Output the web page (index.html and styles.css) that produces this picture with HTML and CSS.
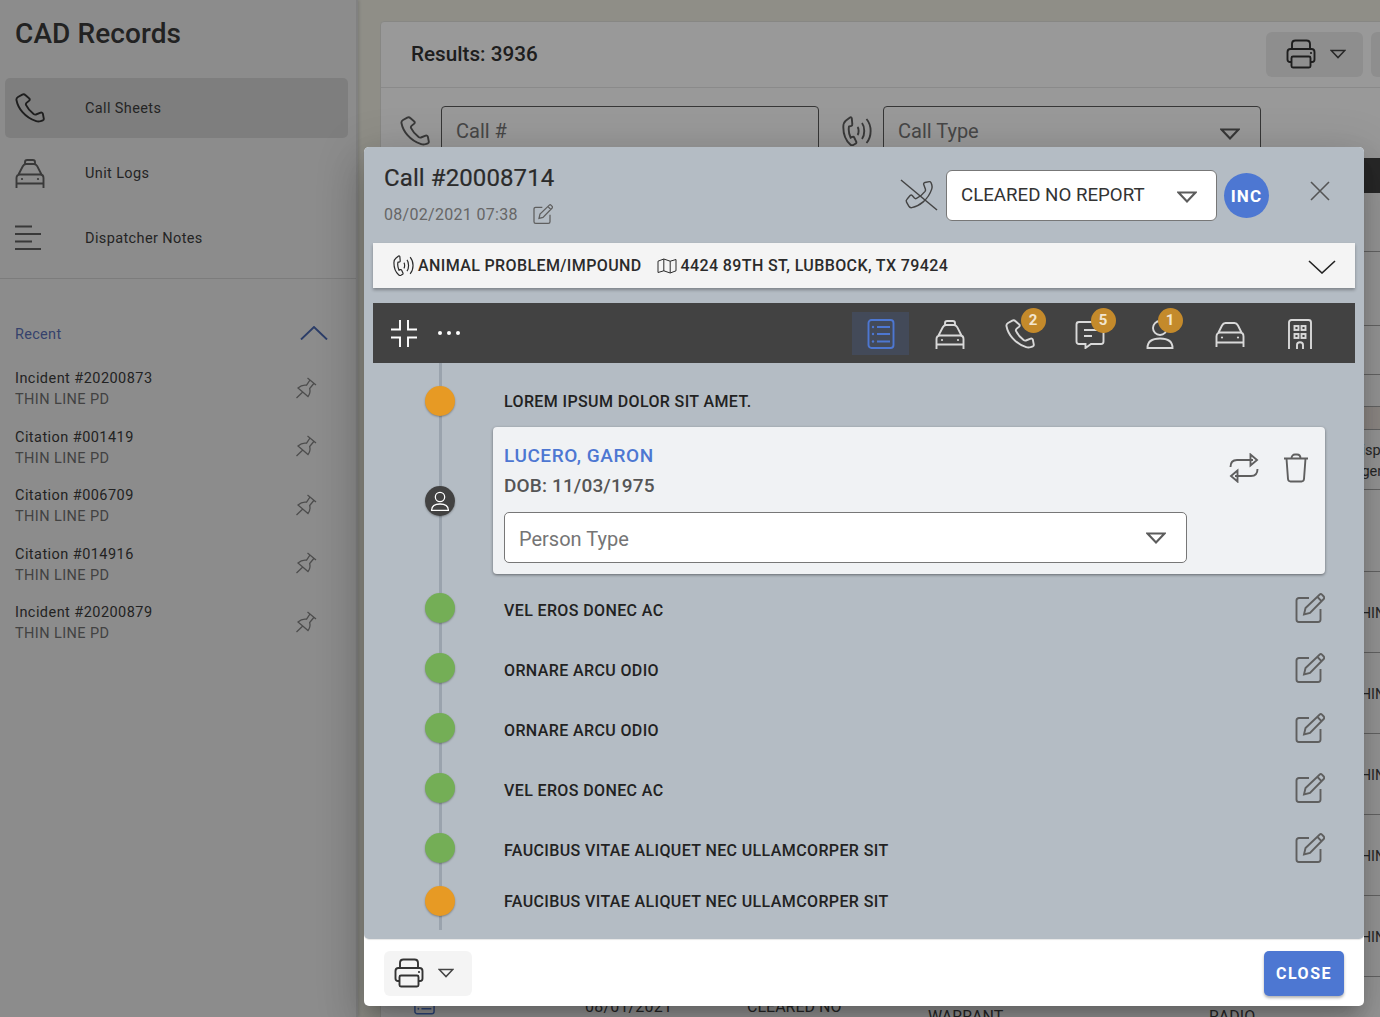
FILE: index.html
```html
<!DOCTYPE html>
<html lang="en">
<head>
<meta charset="utf-8">
<title>CAD Records</title>
<link rel="stylesheet" href="styles.css">
</head>
<body>
<svg class="defs" width="0" height="0" aria-hidden="true">
  <symbol id="i-phone" viewBox="0 0 30 30"><path d="M7.3 1.6 3 4C1.8 4.7 1.2 5.9 1.5 7.2 3 15 9.500 24.300 21.200 28.200c1.500.5 3 .4 4.400 0l2.300-.9c.7-.4 1-1 .9-1.700l-.9-4.700c-.2-1-1.200-1.600-2.200-1.200l-4.800 1.800c-.9.3-1.600.1-2.300-.4-3.200-2.500-5.900-5.700-7.500-9-.4-.8-.2-1.600.4-2.200l2.700-2.300c.6-.6.700-1.300.2-2L10.600 2.300C9.700 1.300 8.400 1 7.300 1.600Z"/></symbol>
  <symbol id="i-taxi" viewBox="0 0 30 30"><path d="M10 6V4.300C10 3 10.800 2 12.200 2h5.600C19.200 2 20 3 20 4.300V6M3.500 16.500 7.800 8.200C8.500 6.800 9.600 6 11 6h8c1.400 0 2.500.8 3.200 2.200l4.300 8.300M1.500 30V20c0-2 1.200-3.500 3.500-3.500h20c2.300 0 3.500 1.500 3.500 3.500v10M1.500 25.500h27"/><circle class="fill" cx="7" cy="21" r="1.100"/><circle class="fill" cx="23" cy="21" r="1.100"/></symbol>
  <symbol id="i-car" viewBox="0 0 30 30"><path d="M3.500 13.500 7 6.500C7.800 5 8.800 4 10.500 4h9c1.700 0 2.700 1 3.500 2.500l3.500 7M1.500 28V17.500c0-2.500 1.500-4 3.500-4h20c2 0 3.500 1.500 3.500 4V28M1.500 23.500h27"/><circle class="fill" cx="7" cy="18.500" r="1.100"/><circle class="fill" cx="23" cy="18.500" r="1.100"/></symbol>
  <symbol id="i-lines" viewBox="0 0 30 30"><path d="M0 3.500H17M0 11H26M0 18.500H17M0 26H26"/></symbol>
  <symbol id="i-pin" viewBox="0 0 22 22"><path d="M12.500 1 21 8M15 3 11.500 8.200C8.500 7.700 5.500 8.700 3 11l10 8.500c1.800-2.300 2.400-5 1.700-8L18.800 6.500M7.500 15.300 1.500 21"/></symbol>
  <symbol id="i-signal" viewBox="0 0 30 30"><path d="M8 1.500 4 4.500C2 6 1.300 8 1.300 11c0 7 3 14 7 17.500 1 1 2 1 3 .5l2.500-1.500c.6-.5.7-1.100.4-1.800l-2-4.200c-.4-.8-1-.9-1.800-.6l-1.800.8C7 18 6.400 13.500 7 10.500l2.300-.6c.8-.3 1.100-.9 1-1.700L9.800 2.400C9.600 1.400 8.800 1 8 1.500Z"/><path d="M15.500 11c1.500 1.300 1.500 6.500 0 8M20 7c3 3.800 3 12.200 0 16M24.500 3c5.500 6.500 5.500 17.500 0 24"/></symbol>
  <symbol id="i-map" viewBox="0 0 20 16"><path d="M1 3.200 6.800 1l6.400 2.200L19 1.500v11.300l-5.800 2.200-6.400-2.200L1 14.500ZM6.800 1v12M13.200 3.200V15"/></symbol>
  <symbol id="i-caret" viewBox="0 0 20 12"><path d="M1.500 1.500h17L10 10.500Z"/></symbol>
  <symbol id="i-edit" viewBox="0 0 30 30"><path d="M14 5H4C2.500 5 1.500 6 1.500 7.500v19C1.500 28 2.500 29 4 29h19c1.500 0 2.500-1 2.500-2.500V16"/><path d="M9 21.500 10.500 15 24.500 1.700c.8-.7 1.800-.7 2.500 0l1.700 1.800c.7.800.7 1.700 0 2.500L15 20Z M22.500 4l4.200 4.300"/></symbol>
  <symbol id="i-printer" viewBox="0 0 30 30"><path d="M6 10V5c0-2.200 1.300-3.500 3.500-3.500h11C22.700 1.500 24 2.800 24 5v5M6 23H4c-1.500 0-2.500-1-2.500-2.500V13c0-1.800 1.200-3 3-3h21c1.800 0 3 1.200 3 3v7.500c0 1.500-1 2.500-2.500 2.500h-2"/><rect x="5.500" y="17.500" width="19" height="11" rx="1.500"/><circle class="fill" cx="25" cy="14" r="1.100"/></symbol>
  <symbol id="i-list" viewBox="0 0 30 30"><rect x="2.500" y="1" width="25" height="28" rx="3"/><path d="M11 8h13M11 15h13M11 22.500h13"/><circle class="fill" cx="7" cy="8" r="1.200"/><circle class="fill" cx="7" cy="15" r="1.200"/><circle class="fill" cx="7" cy="22.500" r="1.200"/></symbol>
  <symbol id="i-chat" viewBox="0 0 30 30"><path d="M4 3h22c1.500 0 2.500 1 2.500 2.500v17c0 1.500-1 2.500-2.500 2.500H16l-5.500 4v-4H4c-1.500 0-2.500-1-2.500-2.500v-17C1.500 4 2.500 3 4 3Z"/><path d="M9 11h13M9 17h8"/></symbol>
  <symbol id="i-user" viewBox="0 0 30 30"><circle cx="15" cy="9" r="7"/><path d="M2.500 29c0-6.500 4-9.500 12.500-9.500S27.500 22.500 27.500 29Z"/></symbol>
  <symbol id="i-building" viewBox="0 0 30 30"><path d="M4 30V3.500C4 2 5 1 6.500 1h17C25 1 26 2 26 3.500V30M12 30v-4c0-3.600 6-3.600 6 0v4"/><rect x="9.500" y="7" width="4" height="4"/><rect x="16.500" y="7" width="4" height="4"/><rect x="9.500" y="15" width="4" height="4"/><rect x="16.500" y="15" width="4" height="4"/></symbol>
  <symbol id="i-swap" viewBox="0 0 30 30"><path d="M1.500 14C1.500 9.500 4 7 8 7h16M28.500 16c0 4.500-2.500 7-6.500 7H6"/><path d="M21.500 1.500 28 7l-6.500 5.500ZM8.500 17.500 2 23l6.500 5.500Z"/></symbol>
  <symbol id="i-trash" viewBox="0 0 26 30"><path d="M1 5.500h24M8.500 5.500C8.500 3 10 1.500 12 1.500h2c2 0 3.500 1.500 3.500 4M3.500 5.500 5 26c.2 1.600 1 2.500 2.500 2.500h11c1.500 0 2.300-.9 2.500-2.500l1.500-20.500"/></symbol>
  <symbol id="i-phoneoff" viewBox="0 0 38 32"><path d="M1 1 37 31"/><path transform="translate(5 30) rotate(-90) scale(.95)" d="M7.3 1.600 3 4C1.800 4.700 1.200 5.900 1.500 7.200 3 15 9.500 24.300 21.200 28.200c1.500.5 3 .4 4.400 0l2.300-.9c.7-.4 1-1 .9-1.700l-.9-4.700c-.2-1-1.200-1.600-2.200-1.200l-4.800 1.800c-.9.3-1.600.1-2.300-.4-3.200-2.500-5.900-5.700-7.500-9-.4-.8-.2-1.600.4-2.200l2.700-2.300c.6-.6.700-1.300.2-2L10.600 2.300C9.700 1.300 8.400 1 7.300 1.600Z"/></symbol>
</svg>

<div class="page">
  <aside class="sidebar">
    <h1 class="side-title">CAD Records</h1>
    <nav class="side-nav">
      <a class="nav-item active"><svg class="ic30 dark"><use href="#i-phone"/></svg><span>Call Sheets</span></a>
      <a class="nav-item"><svg class="ic30 grey"><use href="#i-taxi"/></svg><span>Unit Logs</span></a>
      <a class="nav-item"><svg class="ic30 grey"><use href="#i-lines"/></svg><span>Dispatcher Notes</span></a>
    </nav>
    <div class="recent-head">
      <span>Recent</span>
      <svg class="chev-up" viewBox="0 0 28 14"><path d="M1 13.500 14 1l13 12.500"/></svg>
    </div>
    <ul class="recent-list">
      <li class="recent-item"><div><b>Incident #20200873</b><i>THIN LINE PD</i></div><svg class="pin"><use href="#i-pin"/></svg></li>
      <li class="recent-item"><div><b>Citation #001419</b><i>THIN LINE PD</i></div><svg class="pin"><use href="#i-pin"/></svg></li>
      <li class="recent-item"><div><b>Citation #006709</b><i>THIN LINE PD</i></div><svg class="pin"><use href="#i-pin"/></svg></li>
      <li class="recent-item"><div><b>Citation #014916</b><i>THIN LINE PD</i></div><svg class="pin"><use href="#i-pin"/></svg></li>
      <li class="recent-item"><div><b>Incident #20200879</b><i>THIN LINE PD</i></div><svg class="pin"><use href="#i-pin"/></svg></li>
    </ul>
  </aside>

  <main class="main">
    <section class="panel">
      <header class="panel-head">
        <h2 class="results">Results: 3936</h2>
        <div class="print-btn bg"><svg class="ic30 dark"><use href="#i-printer"/></svg><svg class="caret"><use href="#i-caret"/></svg></div>
        <div class="more-btn"></div>
      </header>
      <div class="filters">
        <svg class="ic30 grey"><use href="#i-phone"/></svg>
        <div class="field">Call #</div>
        <svg class="ic30 grey"><use href="#i-signal"/></svg>
        <div class="field">Call Type<svg class="caret wide"><use href="#i-caret"/></svg></div>
      </div>
      <div class="table">
        <div class="thead"></div>
        <div class="row r59"></div>
        <div class="row r74"></div>
        <div class="row r49"></div>
        <div class="row r32"></div>
        <div class="row band"></div>
        <div class="row r60"><span class="c-agency">Dispatch<br>Agency</span></div>
        <div class="row r82"></div>
        <div class="row r81"><span class="c-agency">THIN LINE PD</span></div>
        <div class="row r81"><span class="c-agency">THIN LINE PD</span></div>
        <div class="row r81"><span class="c-agency">THIN LINE PD</span></div>
        <div class="row r81"><span class="c-agency">THIN LINE PD</span></div>
        <div class="row r81"><span class="c-agency">THIN LINE PD</span></div>
        <div class="row r81"><svg class="row-icon"><use href="#i-list"/></svg><span class="c-date">08/01/2021<br>07:12</span><span class="c-type">CLEARED NO<br>REPORT</span><span class="c-kind">WARRANT</span><span class="c-src">RADIO</span></div>
      </div>
    </section>
  </main>
</div>

<div class="scrim"></div>

<div class="modal">
  <div class="modal-body">
    <header class="modal-head">
      <div class="call-id">
        <h2>Call #20008714</h2>
        <div class="call-date"><span>08/02/2021 07:38</span><svg class="ic20 grey"><use href="#i-edit"/></svg></div>
      </div>
      <svg class="phone-off"><use href="#i-phoneoff"/></svg>
      <div class="status-select"><span class="status-text">CLEARED NO REPORT</span><svg class="caret wide"><use href="#i-caret"/></svg></div>
      <div class="inc">INC</div>
      <svg class="close-x" viewBox="0 0 20 20"><path d="M1 1l18 18M19 1 1 19"/></svg>
    </header>

    <div class="info-bar">
      <svg class="ic21"><use href="#i-signal"/></svg>
      <span class="info-type">ANIMAL PROBLEM/IMPOUND</span>
      <svg class="ic-map"><use href="#i-map"/></svg>
      <span>4424 89TH ST, LUBBOCK, TX 79424</span>
      <svg class="chev-down" viewBox="0 0 28 14"><path d="M1 1l13 12L27 1"/></svg>
    </div>

    <div class="toolbar">
      <svg class="compress" viewBox="0 0 26 27"><path d="M0 9.500h9V0M26 9.500h-9V0M0 17.500h9V27M26 17.500h-9V27"/></svg>
      <div class="dots"><i></i><i></i><i></i></div>
      <div class="tabs">
        <div class="tab active"><svg class="ic30"><use href="#i-list"/></svg></div>
        <div class="tab"><svg class="ic30"><use href="#i-taxi"/></svg></div>
        <div class="tab"><svg class="ic30"><use href="#i-phone"/></svg><span class="badge">2</span></div>
        <div class="tab"><svg class="ic30"><use href="#i-chat"/></svg><span class="badge">5</span></div>
        <div class="tab"><svg class="ic30"><use href="#i-user"/></svg><span class="badge near">1</span></div>
        <div class="tab"><svg class="ic30"><use href="#i-car"/></svg></div>
        <div class="tab"><svg class="ic30"><use href="#i-building"/></svg></div>
      </div>
    </div>

    <div class="timeline">
      <div class="tl-row first"><span class="dot orange"></span><span class="tl-text">LOREM IPSUM DOLOR SIT AMET.</span></div>
      <div class="tl-card-row">
        <span class="dot dark-dot"><svg viewBox="0 0 30 30"><use href="#i-user"/></svg></span>
        <article class="card">
          <div class="card-top">
            <div>
              <div class="person">LUCERO, GARON</div>
              <div class="dob">DOB: 11/03/1975</div>
            </div>
            <div class="card-actions">
              <svg class="ic30 grey"><use href="#i-swap"/></svg>
              <svg class="ic-trash grey"><use href="#i-trash"/></svg>
            </div>
          </div>
          <div class="person-type"><span class="pt-text">Person Type</span><svg class="caret wide"><use href="#i-caret"/></svg></div>
        </article>
      </div>
      <div class="tl-row edit"><span class="dot green"></span><span class="tl-text">VEL EROS DONEC AC</span><svg class="ic30 grey"><use href="#i-edit"/></svg></div>
      <div class="tl-row edit"><span class="dot green"></span><span class="tl-text">ORNARE ARCU ODIO</span><svg class="ic30 grey"><use href="#i-edit"/></svg></div>
      <div class="tl-row edit"><span class="dot green"></span><span class="tl-text">ORNARE ARCU ODIO</span><svg class="ic30 grey"><use href="#i-edit"/></svg></div>
      <div class="tl-row edit"><span class="dot green"></span><span class="tl-text">VEL EROS DONEC AC</span><svg class="ic30 grey"><use href="#i-edit"/></svg></div>
      <div class="tl-row edit"><span class="dot green"></span><span class="tl-text">FAUCIBUS VITAE ALIQUET NEC ULLAMCORPER SIT</span><svg class="ic30 grey"><use href="#i-edit"/></svg></div>
      <div class="tl-row last"><span class="dot orange"></span><span class="tl-text">FAUCIBUS VITAE ALIQUET NEC ULLAMCORPER SIT</span></div>
    </div>
  </div>
  <footer class="modal-foot">
    <div class="print-btn light"><svg class="ic30 dark"><use href="#i-printer"/></svg><svg class="caret"><use href="#i-caret"/></svg></div>
    <button class="close-btn">CLOSE</button>
  </footer>
</div>
</body>
</html>
```
FILE: styles.css
```css
* { box-sizing: border-box; }
html, body { margin: 0; height: 100%; }
body {
  width: 1380px;
  height: 1017px;
  overflow: hidden;
  position: relative;
  font-family: Roboto, "Liberation Sans", sans-serif;
  color: #333;
  background: #eeede2;
}
.defs { position: absolute; }
svg { display: block; flex: none; fill: none; stroke: currentColor; stroke-width: 1.9; }
.fill { fill: currentColor; stroke: none; }
.ic30 { width: 30px; height: 30px; }
.ic20 { width: 20px; height: 20px; }
.ic21 { width: 21px; height: 21px; }
.dark { color: #333; }
.grey { color: #5f5f5f; }

.page { display: flex; height: 1017px; }

/* Sidebar */
.sidebar {
  width: 358px;
  flex: none;
  background: #eaeaea;
  border-right: 2px solid #d8d8d8;
  box-shadow: 1px 0 3px rgba(0,0,0,.15);
}
.side-title { margin: 0; padding: 15px 0 0 15px; height: 78px; font-size: 28px; line-height: 37px; font-weight: 500; letter-spacing: .1px; color: #393939; }
.side-nav { display: flex; flex-direction: column; gap: 5px; padding: 0 8px 10px 5px; border-bottom: 1px solid #cfcfcf; height: 201px; }
.nav-item { display: flex; align-items: center; gap: 40px; height: 60px; padding-left: 10px; border-radius: 5px; font-size: 14.500px; letter-spacing: .38px; color: #3d3d3d; }
.nav-item.active { background: #d3d3d3; }
.recent-head { display: flex; justify-content: space-between; align-items: center; height: 27px; margin: 42px 28px 0 15px; font-size: 14.500px; letter-spacing: .3px; color: #5a6fb5; }
.chev-up { width: 28px; height: 14px; color: #4a67ad; margin-top: -3px; }
.recent-list { list-style: none; margin: 12.400px 0 0; padding: 0; }
.recent-item { display: flex; justify-content: space-between; align-items: center; height: 58.500px; padding: 0 39px 0 15px; }
.recent-item b { display: block; font-weight: 400; font-size: 14.500px; line-height: 20px; letter-spacing: .45px; color: #3a3a3a; }
.recent-item i { display: block; font-style: normal; font-size: 14.500px; line-height: 21px; letter-spacing: .42px; color: #6e6e6e; }
.pin { width: 22px; height: 22px; margin-top: -4px; color: #808080; stroke-width: 1.300; }

/* Background page */
.main { flex: 1; min-width: 0; padding: 21px 0 0 22px; overflow: hidden; }
.panel { width: 1100px; height: 1100px; background: #fff; border: 1px solid #e2e2dc; border-radius: 4px 0 0 0; }
.panel-head { display: flex; align-items: center; height: 66px; padding: 0 8px 1px 30px; border-bottom: 1px solid #e6e6e6; }
.results { flex: 1; margin: 0; font-size: 20.700px; font-weight: 500; color: #333; }
.print-btn { display: flex; align-items: center; gap: 14px; padding-left: 10px; border-radius: 6px; height: 45px; }
.print-btn.bg { width: 97px; padding-left: 20px; background: #ededed; }
.print-btn.light { width: 88px; background: #f4f4f4; }
.more-btn { width: 100px; height: 45px; margin-left: 8px; background: #ededed; border-radius: 6px; }
.caret { width: 16px; height: 10px; color: #444; }
.caret.wide { width: 20px; height: 12px; color: #5c5c5c; margin-left: auto; stroke-width: 2.100; }
.filters { display: flex; align-items: flex-start; height: 70px; padding: 18px 0 0 19px; }
.filters > svg { margin-top: 10px; }
.field { display: flex; align-items: center; width: 378px; height: 52px; margin: 0 23px 0 11px; padding: 0 20px 3px 14px; border: 1px solid #5a5a5a; border-radius: 4px; font-size: 20px; color: #777; background: #fff; }
.field .caret { margin-top: 6px; }
.thead { height: 35px; background: #444; }
.row { display: flex; align-items: center; padding-left: 32px; border-bottom: 1px solid #aaa; font-size: 16px; line-height: 20px; color: #444; position: relative; }
.r59 { height: 59px; }
.r74 { height: 74px; }
.r49 { height: 49px; }
.r32 { height: 32px; }
.band { height: 23px; background: #f0e8e2; }
.r60 { height: 60px; }
.r82 { height: 82px; }
.r81 { height: 81px; }
.row-icon { width: 23px; height: 30px; color: #4d77d2; margin: -28px 149px 0 0; }
.c-date { width: 162px; letter-spacing: .2px; }
.c-type { width: 181px; }
.c-kind { width: 281px; }
.c-src { width: 146px; }
.c-agency { position: absolute; left: 971px; margin-top: 3px; font-size: 14.500px; line-height: 21px; white-space: nowrap; }

.scrim { position: absolute; inset: 0; background: rgba(0,0,0,.4); }

/* Modal */
.modal {
  position: absolute;
  left: 364px;
  top: 147px;
  width: 1000px;
  height: 859px;
  border-radius: 5px;
  background: #fff;
  box-shadow: 0 11px 15px -7px rgba(0,0,0,.2), 0 24px 38px 3px rgba(0,0,0,.14), 0 9px 46px 8px rgba(0,0,0,.12);
  display: flex;
  flex-direction: column;
}
.modal-body { height: 792px; padding: 0 9px; background: #b4bcc4; border-radius: 5px; box-shadow: 0 1px 1px rgba(0,0,0,.1); }
.modal-head { display: flex; align-items: flex-start; height: 96px; padding: 16px 0 0 11px; }
.call-id { flex: 1; }
.call-id h2 { margin: 0; font-size: 24px; line-height: 30px; font-weight: 400; letter-spacing: .1px; color: #2b2b2b; -webkit-text-stroke: .2px #2b2b2b; }
.call-date { display: flex; align-items: center; gap: 15px; margin-top: 11px; height: 20px; font-size: 16px; letter-spacing: .3px; color: #666; }
.phone-off { width: 38px; height: 32px; margin: 16px 8px 0 0; color: #444; stroke-width: 1.500; }
.status-select { display: flex; align-items: center; width: 271px; height: 51px; margin: 7px 7px 0 0; padding: 0 19px 0 14px; background: #fff; border: 1px solid #777; border-radius: 6px; font-size: 18.700px; color: #333; }
.status-text { margin-top: -2px; }
.status-select .caret { margin-top: 3px; }
.inc { display: flex; align-items: center; justify-content: center; width: 45px; height: 45px; margin-top: 10px; border-radius: 50%; background: #4d77d2; color: #fff; font-weight: 700; font-size: 17px; letter-spacing: 1.100px; }
.close-x { width: 20px; height: 20px; margin: 18px 25px 0 41px; color: #555; stroke-width: 1.600; }

.info-bar { display: flex; align-items: center; height: 45px; padding: 0 20px; background: #f4f4f4; box-shadow: 0 2px 3px rgba(0,0,0,.3); font-size: 16px; font-weight: 500; letter-spacing: .38px; color: #2b2b2b; }
.info-bar .ic21 { margin-right: 4px; stroke-width: 1.700; }
.info-type { margin-right: 15px; }
.ic-map { width: 20px; height: 16px; margin-right: 4px; stroke-width: 1; }
.chev-down { width: 28px; height: 14px; margin: 2px -1px 0 auto; stroke-width: 1.600; color: #222; }

.toolbar { display: flex; align-items: center; height: 60px; margin-top: 15px; padding-left: 18px; background: #424242; color: #fff; }
.compress { width: 26px; height: 27px; }
.dots { display: flex; gap: 5px; margin-left: 21px; }
.dots i { width: 4px; height: 4px; border-radius: 50%; background: #fff; }
.tabs { display: flex; margin-left: auto; margin-right: 20px; color: #d9d9d9; }
.tab { position: relative; display: flex; align-items: center; justify-content: center; width: 70px; height: 43px; margin-top: 1px; }
.tab.active { width: 57px; margin: 1px 6px 0 0; background: rgba(77,119,210,.16); color: #4d77d2; }
.badge { position: absolute; top: -4px; left: 35.500px; width: 25px; height: 25px; border-radius: 50%; background: #c48a2b; color: #f2e6cf; font-size: 15px; font-weight: 700; line-height: 25px; text-align: center; }
.badge.near { left: 32.500px; }

.timeline { position: relative; padding-top: 8px; height: 575px; }
.timeline::before { content: ""; position: absolute; left: 66px; top: 0; bottom: 8px; width: 3px; background: #9aa3ad; }
.dot { position: relative; display: flex; align-items: center; justify-content: center; width: 30px; height: 30px; flex: none; margin-left: 52px; border-radius: 50%; box-shadow: 0 1px 2px rgba(0,0,0,.3); }
.orange { background: #e79a24; }
.green { background: #74ae56; }
.dark-dot { background: #424242; color: #fff; }
.dark-dot svg { width: 20px; height: 20px; }
.tl-row { display: flex; align-items: center; height: 60px; padding-right: 30px; }
.tl-row .ic30 { margin-left: auto; }
.tl-text { margin-left: 49px; font-size: 16px; font-weight: 500; letter-spacing: .38px; color: #222; }
.tl-row.edit .tl-text { padding-top: 4px; }
.tl-row.last { height: 46px; }
.tl-card-row { display: flex; align-items: center; margin-top: -4px; margin-bottom: 4px; }
.card { width: 832px; height: 147px; margin-left: 38px; padding: 16px 0 0 11px; background: #f0f2f4; border-radius: 4px; box-shadow: 0 1px 3px rgba(0,0,0,.45); }
.card-top { display: flex; justify-content: space-between; height: 69px; padding-right: 16px; }
.person { font-size: 19px; line-height: 25px; font-weight: 500; letter-spacing: .55px; color: #4d77d2; }
.dob { margin-top: 5px; font-size: 19px; line-height: 25px; font-weight: 500; letter-spacing: .15px; color: #555; }
.card-actions { display: flex; gap: 24px; padding-top: 10px; }
.ic-trash { width: 26px; height: 30px; }
.person-type { display: flex; align-items: center; width: 683px; height: 51px; padding: 0 20px 0 14px; background: #fff; border: 1px solid #777; border-radius: 5px; font-size: 20px; color: #757575; }
.pt-text { margin-top: 2px; }

.modal-foot { flex: 1; display: flex; align-items: center; justify-content: space-between; padding: 1px 20px 0; }
.close-btn { width: 80px; height: 45px; border: 0; border-radius: 5px; background: #4d77d2; color: #fff; font: 700 16px Roboto, sans-serif; letter-spacing: 1.500px; box-shadow: 0 2px 3px rgba(0,0,0,.3); }
```
